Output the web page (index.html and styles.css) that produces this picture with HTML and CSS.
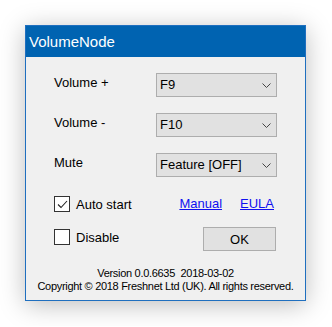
FILE: index.html
```html
<!DOCTYPE html>
<html lang="en">
<head>
<meta charset="UTF-8">
<title>VolumeNode</title>
<link rel="stylesheet" href="styles.css">
</head>
<body>

<div class="window">
  <div class="titlebar">VolumeNode</div>

  <div class="content">
    <div class="row">
      <span class="label">Volume +</span>
      <div class="combo"><span>F9</span><svg class="chev" width="9" height="5" viewBox="0 0 9 5"><polyline points="0.5,0.5 4.5,4.5 8.5,0.5" fill="none" stroke="#444" stroke-width="1"/></svg></div>
    </div>
    <div class="row">
      <span class="label">Volume -</span>
      <div class="combo"><span>F10</span><svg class="chev" width="9" height="5" viewBox="0 0 9 5"><polyline points="0.5,0.5 4.5,4.5 8.5,0.5" fill="none" stroke="#444" stroke-width="1"/></svg></div>
    </div>
    <div class="row row-mute">
      <span class="label">Mute</span>
      <div class="combo"><span>Feature [OFF]</span><svg class="chev" width="9" height="5" viewBox="0 0 9 5"><polyline points="0.5,0.5 4.5,4.5 8.5,0.5" fill="none" stroke="#444" stroke-width="1"/></svg></div>
    </div>

    <div class="row row-check">
      <label class="check">
        <span class="box"><svg width="13" height="13" viewBox="0 0 13 13"><polyline points="2,6.5 5,9.5 11,3" fill="none" stroke="#222" stroke-width="1.1"/></svg></span>
        Auto start
      </label>
      <div class="links">
        <a href="#">Manual</a>
        <a href="#">EULA</a>
      </div>
    </div>

    <div class="row row-bottom">
      <label class="check check-off">
        <span class="box"></span>
        Disable
      </label>
      <button class="btn">OK</button>
    </div>

    <div class="footer">
      <div>Version 0.0.6635&nbsp; 2018-03-02</div>
      <div>Copyright © 2018 Freshnet Ltd (UK). All rights reserved.</div>
    </div>
  </div>
</div>

</body>
</html>
```

FILE: styles.css
```css
*{box-sizing:border-box;margin:0;padding:0}
body{
  background:#fff;
  padding:25px;
  font-family:"Liberation Sans",Arial,sans-serif;
  color:#000;
}

/* ---------- ventana ---------- */
.window{
  width:281px;
  height:276px;
  border:1px solid #1f6fbf;
  background:#f0f0f0;
  box-shadow:0 4px 24px rgba(0,0,0,.26);
}
.titlebar{
  height:31px;
  background:#0063b1;
  color:#fff;
  font-size:15px;
  line-height:17px;
  padding:7px 0 0 3px;
}

/* ---------- formulario ---------- */
.content{padding:16px 28px 0 28px}
.row{
  display:flex;
  align-items:flex-start;
  height:24px;
  margin-bottom:16px;
}
.row-mute{margin-top:1px;margin-bottom:15px}
.label{
  width:102px;
  font-size:13px;
  line-height:15px;
  padding-top:2px;
}
.combo{
  width:121px;
  height:24px;
  background:#e1e1e1;
  border:1px solid #adadad;
  display:flex;
  align-items:center;
  justify-content:space-between;
  padding:0 5px 0 3px;
  font-size:13px;
  line-height:22px;
}
.chev{display:block}

/* ---------- checks y links ---------- */
.row-check{align-items:center;margin-bottom:11px}
.check{
  display:flex;
  align-items:center;
  gap:6px;
  font-size:13px;
  line-height:15px;
}
.box{
  width:16px;height:16px;
  border:1px solid #333;
  background:#fff;
  display:flex;align-items:center;justify-content:center;
}
.links{
  margin-left:auto;
  margin-right:3px;
  display:flex;
  gap:18px;
  font-size:13px;
  line-height:15px;
  margin-top:-2px;
}
.links a{color:#1010f0;text-decoration:underline}

.row-bottom{align-items:flex-start}
.check-off{margin-top:2px}
.btn{
  margin-left:auto;
  margin-right:1px;
  width:73px;
  height:24px;
  background:#e1e1e1;
  border:1px solid #adadad;
  font-family:inherit;
  font-size:13px;
  color:#000;
}

/* ---------- pie ---------- */
.footer{
  text-align:center;
  font-size:11px;
  line-height:13px;
  letter-spacing:-0.3px;
  white-space:nowrap;
  margin-top:15px;
  margin-left:-20px;
  margin-right:-20px;
}
```
